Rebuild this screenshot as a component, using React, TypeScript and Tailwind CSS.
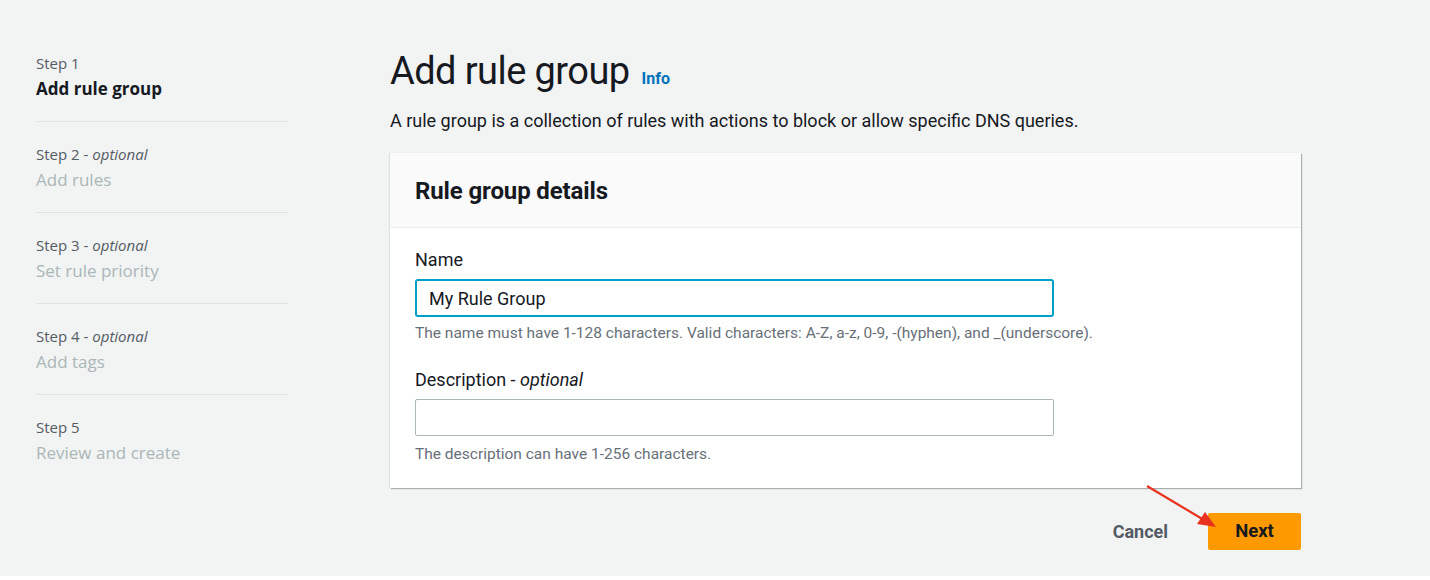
import React from "react";

const steps = [
  { label: "Step 1", optional: false, title: "Add rule group", active: true },
  { label: "Step 2", optional: true, title: "Add rules", active: false },
  { label: "Step 3", optional: true, title: "Set rule priority", active: false },
  { label: "Step 4", optional: true, title: "Add tags", active: false },
  { label: "Step 5", optional: false, title: "Review and create", active: false },
];

const Sidebar = () => (
  <nav className="w-[252px] shrink-0 font-['Open_Sans',sans-serif]">
    {steps.map((s, i) => (
      <div
        key={s.label}
        className={`${i === 0 ? "pt-0" : "pt-[23px]"} ${
          i < steps.length - 1 ? "pb-[20px] border-b border-[#dfe3e3]" : ""
        }`}
      >
        <div className="-mt-[1px] text-[15px] leading-[20px] text-[#545b64]">
          {s.label}
          {s.optional && (
            <>
              {" - "}
              <span className="italic">optional</span>
            </>
          )}
        </div>
        <div
          className={`mt-[4px] text-[17px] leading-[24px] ${
            s.active ? "font-bold text-[#16191f]" : "text-[#aab7b8]"
          }`}
        >
          {s.title}
        </div>
      </div>
    ))}
  </nav>
);

const Arrow = () => (
  <svg
    className="absolute left-[-66px] top-[-29px]"
    width="80"
    height="50"
    viewBox="0 0 80 50"
  >
    <line x1="5" y1="2" x2="62" y2="36" stroke="#e8321f" strokeWidth="2.2" />
    <polygon points="74,43 55,40 63,28" fill="#e8321f" />
  </svg>
);

export default function App() {
  return (
    <div className="bg-white">
      <div className="h-[576px] bg-[#f2f3f3] pl-[36px] pt-[54px] flex gap-[102px]">
        <Sidebar />
        <main className="w-[911px] font-['Roboto',sans-serif] text-[#16191f]">
          <div className="flex items-baseline gap-[12px] -mt-[5px]">
            <h1 className="text-[38px] leading-[44px] font-normal tracking-[-0.015em]">
              Add rule group
            </h1>
            <a className="text-[16px] font-bold text-[#0073bb]">Info</a>
          </div>
          <p className="mt-[16px] text-[18px] leading-[24px] text-[#16191f]">
            A rule group is a collection of rules with actions to block or allow
            specific DNS queries.
          </p>
          <section className="mt-[20px] bg-white shadow-[1px_1px_1px_0_rgba(0,28,36,0.3),-1px_0px_1px_0_rgba(0,28,36,0.08)]">
            <div className="h-[75px] bg-[#fafafa] border-b border-[#eaeded] px-[25px] flex items-center">
              <h2 className="mt-[2px] text-[24px] font-bold tracking-[-0.005em]">
                Rule group details
              </h2>
            </div>
            <div className="px-[25px] pt-[21px] pb-[25px]">
              <label className="block text-[18px] leading-[22px]">Name</label>
              <div className="mt-[8px] w-[639px] h-[38px] rounded-[3px] border-2 border-[#00a1c9] bg-white px-[12px] flex items-center text-[18px]">
                My Rule Group
              </div>
              <p className="mt-[7px] text-[15.5px] leading-[18px] text-[#687078]">
                The name must have 1-128 characters. Valid characters: A-Z, a-z,
                0-9, -(hyphen), and _(underscore).
              </p>
              <label className="block mt-[27px] text-[18px] leading-[22px]">
                Description - <span className="italic">optional</span>
              </label>
              <div className="mt-[8px] w-[639px] h-[37px] rounded-[2px] border border-[#aab7b8] bg-white" />
              <p className="mt-[9px] text-[15.5px] leading-[18px] text-[#687078]">
                The description can have 1-256 characters.
              </p>
            </div>
          </section>
          <div className="mt-[25px] flex justify-end items-center gap-[40px]">
            <button className="text-[18px] font-bold text-[#545b64]">
              Cancel
            </button>
            <div className="relative">
              <Arrow />
              <button className="w-[93px] h-[37px] rounded-[2px] bg-[#ff9900] text-[18.5px] font-bold text-[#16191f]">
                Next
              </button>
            </div>
          </div>
        </main>
      </div>
    </div>
  );
}
